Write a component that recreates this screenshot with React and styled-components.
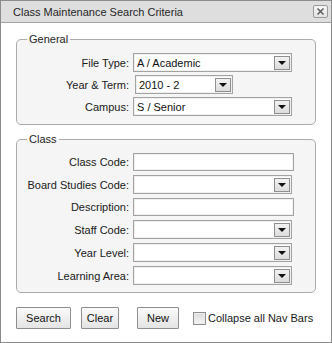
import React from 'react';
import styled, { createGlobalStyle } from 'styled-components';

const GlobalStyle = createGlobalStyle`
  html, body {
    margin: 0;
    padding: 0;
    background: #fff;
  }
  body {
    font-family: Arial, "Liberation Sans", sans-serif;
    font-size: 11px;
    color: #1a1a1a;
  }
`;

const Window = styled.div`
  width: 332px;
  height: 343px;
  box-sizing: border-box;
  border: 1px solid #8c8c8c;
  background: #fff;
  display: flex;
  flex-direction: column;
`;

const TitleBar = styled.div`
  height: 21px;
  flex: none;
  display: flex;
  align-items: center;
  justify-content: space-between;
  padding: 0 3px 0 12px;
  background: #dedede;
  border-bottom: 1px solid #a3a3a3;
  font-size: 11px;
  color: #262626;
`;

const CloseButton = styled.button`
  width: 15px;
  height: 13px;
  padding: 0;
  display: flex;
  align-items: center;
  justify-content: center;
  border: 1px solid #9a9a9a;
  border-radius: 2px;
  background: linear-gradient(#f6f6f6, #e2e2e2);
`;

const Content = styled.div`
  padding: 10px 15px 0;
  display: flex;
  flex-direction: column;
  gap: 8px;
`;

const Group = styled.fieldset`
  margin: 0;
  padding: 7px 0 ${(p) => p.$bottom}px;
  border: 1px solid #ababab;
  border-radius: 5px;
  background: #f5f5f5;
  min-width: 0;
`;

const Legend = styled.legend`
  margin-left: 10px;
  padding: 0 2px;
  font-size: 11px;
  color: #262626;
  line-height: 13px;
`;

const Form = styled.div`
  display: grid;
  grid-template-columns: 112px 1fr;
  column-gap: 4px;
  row-gap: ${(p) => p.$gap}px;
  align-items: center;
`;

const Label = styled.label`
  text-align: right;
  white-space: nowrap;
  color: #1a1a1a;
`;

const Field = styled.div`
  width: ${(p) => p.$width}px;
  height: ${(p) => p.$height}px;
  margin-left: ${(p) => p.$shift || 0}px;
  box-sizing: border-box;
  border: 1px solid #a2a2a2;
  box-shadow: inset 0 0 0 1px #f0f0f0;
  background: #fff;
  display: flex;
  align-items: center;
  justify-content: space-between;
  padding: 0 1px 0 3px;
  color: #111;
`;

const DropButton = styled.span`
  width: 16px;
  height: 14px;
  box-sizing: border-box;
  border: 1px solid #8f8f8f;
  background: linear-gradient(#f2f2f2, #dcdcdc);
  display: flex;
  align-items: center;
  justify-content: center;
`;

const Arrow = styled.span`
  width: 0;
  height: 0;
  border-left: 4px solid transparent;
  border-right: 4px solid transparent;
  border-top: 4px solid #111;
  margin-top: 1px;
`;

const Actions = styled.div`
  display: flex;
  align-items: center;
  margin-top: 6px;
`;

const Button = styled.button`
  height: 22px;
  width: ${(p) => p.$width}px;
  margin-right: ${(p) => p.$gap}px;
  padding: 0;
  border: 1px solid #8e8e8e;
  border-radius: 1px;
  background: linear-gradient(#fafafa, #e4e4e4);
  font-family: Arial, "Liberation Sans", sans-serif;
  font-size: 11px;
  color: #111;
`;

const Check = styled.label`
  display: flex;
  align-items: center;
  gap: 2px;
  margin-left: 4px;
  white-space: nowrap;
  color: #1a1a1a;
`;

const Box = styled.span`
  width: 13px;
  height: 13px;
  box-sizing: border-box;
  border: 1px solid #8e8e8e;
  background: linear-gradient(#dcdcdc, #f4f4f4);
  box-shadow: inset 0 0 0 1px #ececec;
`;

const Select = ({ value, width = 159, shift }) => (
  <Field $width={width} $height={19} $shift={shift}>
    <span>{value}</span>
    <DropButton><Arrow /></DropButton>
  </Field>
);

const TextBox = () => <Field $width={161} $height={18} />;

const CloseIcon = () => (
  <svg width="9" height="9" viewBox="0 0 9 9">
    <path d="M1.5 1.5 L7.5 7.5 M7.5 1.5 L1.5 7.5" stroke="#555" strokeWidth="1.4" />
  </svg>
);

export default function App() {
  return (
    <>
      <GlobalStyle />
      <Window>
        <TitleBar>
          <span>Class Maintenance Search Criteria</span>
          <CloseButton aria-label="Close"><CloseIcon /></CloseButton>
        </TitleBar>
        <Content>
          <Group $bottom={8}>
            <Legend>General</Legend>
            <Form $gap={3}>
              <Label>File Type:</Label>
              <Select value="A / Academic" />
              <Label>Year &amp; Term:</Label>
              <Select value="2010 - 2" width={98} shift={2} />
              <Label>Campus:</Label>
              <Select value="S / Senior" />
            </Form>
          </Group>
          <Group $bottom={7}>
            <Legend>Class</Legend>
            <Form $gap={4}>
              <Label>Class Code:</Label>
              <TextBox />
              <Label>Board Studies Code:</Label>
              <Select />
              <Label>Description:</Label>
              <TextBox />
              <Label>Staff Code:</Label>
              <Select />
              <Label>Year Level:</Label>
              <Select />
              <Label>Learning Area:</Label>
              <Select />
            </Form>
          </Group>
          <Actions>
            <Button $width={55} $gap={10}>Search</Button>
            <Button $width={38} $gap={18}>Clear</Button>
            <Button $width={42} $gap={10}>New</Button>
            <Check><Box />Collapse all Nav Bars</Check>
          </Actions>
        </Content>
      </Window>
    </>
  );
}
